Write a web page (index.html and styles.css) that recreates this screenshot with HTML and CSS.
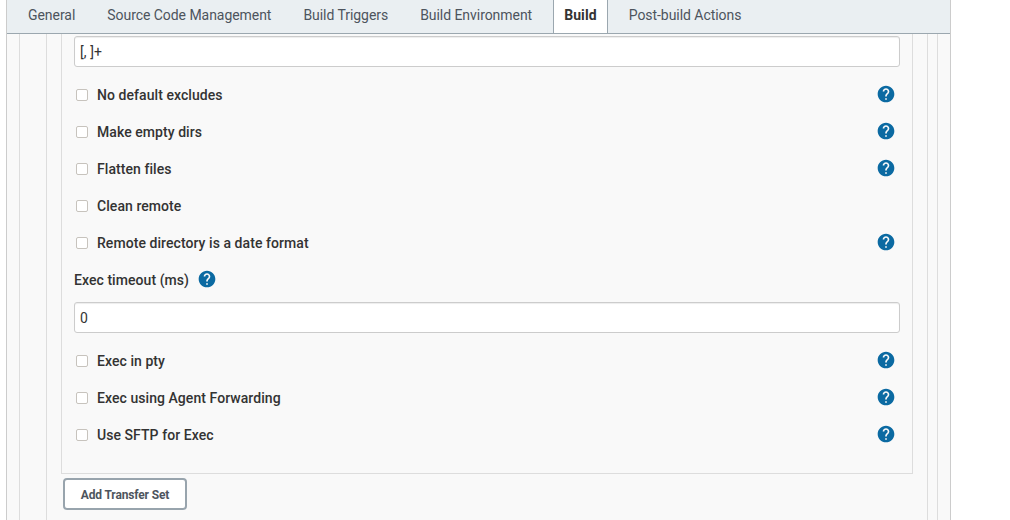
FILE: index.html
```html
<!DOCTYPE html>
<html lang="en">
<head>
<meta charset="utf-8">
<title>Build configuration</title>
<link rel="stylesheet" href="styles.css">
</head>
<body>
<svg class="defs" width="0" height="0"><symbol id="help" viewBox="0 0 24 24"><path d="M12 2C6.48 2 2 6.48 2 12s4.48 10 10 10 10-4.480 10-10S17.520 2 12 2zm1 17h-2v-2h2v2zm2.070-7.750l-.9.920C13.450 12.900 13 13.500 13 15h-2v-.5c0-1.100.45-2.100 1.170-2.830l1.240-1.260c.37-.36.59-.86.59-1.410 0-1.100-.9-2-2-2s-2 .9-2 2H8c0-2.210 1.790-4 4-4s4 1.790 4 4c0 .88-.36 1.680-.93 2.250z"/></symbol></svg>
<main class="config">
  <nav class="tabs">
    <a class="tab">General</a><a class="tab">Source Code Management</a><a class="tab">Build Triggers</a><a class="tab">Build Environment</a><a class="tab active">Build</a><a class="tab">Post-build Actions</a>
  </nav>
  <div class="builder"><div class="publisher">
    <section class="transfer">
      <input class="field" type="text" value="[, ]+">
      <div class="row"><label><input type="checkbox" class="check">No default excludes</label><svg class="help"><use href="#help"/></svg></div>
      <div class="row"><label><input type="checkbox" class="check">Make empty dirs</label><svg class="help"><use href="#help"/></svg></div>
      <div class="row"><label><input type="checkbox" class="check">Flatten files</label><svg class="help"><use href="#help"/></svg></div>
      <div class="row"><label><input type="checkbox" class="check">Clean remote</label></div>
      <div class="row"><label><input type="checkbox" class="check">Remote directory is a date format</label><svg class="help"><use href="#help"/></svg></div>
      <div class="row heading"><span>Exec timeout (ms)</span><svg class="help"><use href="#help"/></svg></div>
      <input class="field timeout" type="text" value="0">
      <div class="row"><label><input type="checkbox" class="check">Exec in pty</label><svg class="help"><use href="#help"/></svg></div>
      <div class="row"><label><input type="checkbox" class="check">Exec using Agent Forwarding</label><svg class="help"><use href="#help"/></svg></div>
      <div class="row"><label><input type="checkbox" class="check">Use SFTP for Exec</label><svg class="help"><use href="#help"/></svg></div>
    </section>
    <button class="add">Add Transfer Set</button>
  </div></div>
</main>
</body>
</html>
```
FILE: styles.css
```css
* { box-sizing: border-box; }
body { margin: 0; height: 520px; overflow: hidden; background: #fff; color: #333; font: 14px/20px Roboto, sans-serif; }
.defs { display: none; }
.config { width: 945px; height: 520px; margin-left: 6px; border: solid #ccc; border-width: 0 1px; background: #f9f9f9; display: flex; flex-direction: column; }
.tabs { height: 34px; flex: none; display: flex; gap: 10px; padding-left: 10px; background: #eaeff2; border-bottom: 1px solid #9ba7af; }
.tab { height: 33px; padding: 5px 10px 0; border: solid transparent; border-width: 0 1px; color: #4d545d; white-space: nowrap; letter-spacing: -.05px; }
.tab.active { background: #fff; border-color: #9ba7af; color: #333; font-weight: 700; letter-spacing: .1px; }
.builder { flex: 1; margin: 0 12px; border: solid #ddd; border-width: 0 1px; padding: 0 9px 0 26px; display: flex; }
.publisher { flex: 1; border: solid #ddd; border-width: 0 1px; padding: 0 14px; }
.transfer { border: solid #ddd; border-width: 0 1px 1px; padding: 2px 12px 20px; }
.field { display: block; width: 100%; height: 31px; margin: 0 0 9px; padding: 0 5px; border: 1px solid #ccc; border-radius: 3px; background: #fff; box-shadow: inset 0 1px 1px rgba(0,0,0,.075); color: #333; font: 14px Roboto, sans-serif; letter-spacing: .1px; }
.timeout { margin-top: 4px; }
.row { height: 37px; display: flex; align-items: center; justify-content: space-between; padding: 0 4px 0 2px; font-weight: 500; letter-spacing: .06px; }
.row label { display: flex; align-items: center; padding-top: 1px; }
.check { appearance: none; width: 12px; height: 12px; margin: 0 9px 0 0; border: 1px solid #c7c3bd; border-radius: 2px; background: #fff; }
.help { width: 20px; height: 20px; flex: none; margin-bottom: 2px; fill: #0b6aa2; }
.heading { justify-content: flex-start; gap: 8px; padding-left: 0; }
.heading span { padding-top: 1px; }
.add { display: block; width: 124px; height: 32px; margin: 4px 0 0 2px; padding: 2px 0 0; border: 2px solid #98a4ad; border-radius: 4px; background: #fff; color: #4d545d; font: 700 12px Roboto, sans-serif; letter-spacing: -.15px; }
```
